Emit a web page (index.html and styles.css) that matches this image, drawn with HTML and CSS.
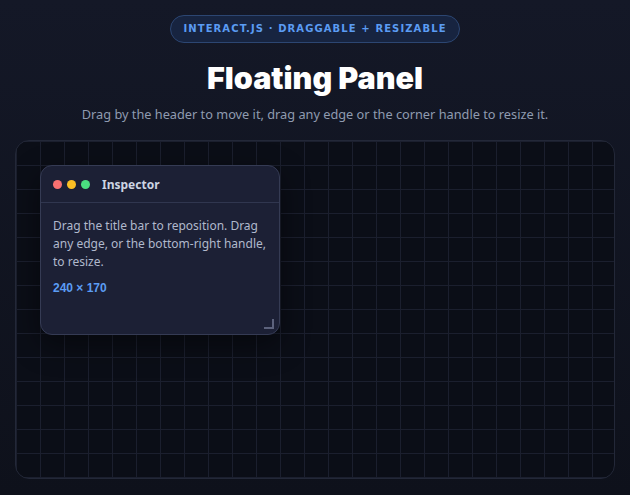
FILE: index.html
```html
<!DOCTYPE html>
<html>
	<head>
		<title>Floating Panel</title>
		<link rel="stylesheet" href="styles.css">
	</head>
	<body>
		<header class="intro">
			<span class="badge">interact.js · draggable + resizable</span>
			<h1>Floating Panel</h1>
			<p class="lead">Drag by the header to move it, drag any edge or the corner handle to resize it.</p>
		</header>
		<div class="stage">
			<div class="panel" style="left: 24px; top: 24px; width: 240px; height: 170px;">
				<div class="panel-head">
					<span class="dot red"></span>
					<span class="dot amber"></span>
					<span class="dot green"></span>
					<span class="panel-title">Inspector</span>
				</div>
				<div class="panel-body">
					<p>Drag the title bar to reposition. Drag any edge, or the bottom-right handle, to resize.</p>
					<p class="size">240 × 170</p>
				</div>
				<span class="grip"></span>
			</div>
		</div>
	</body>
</html>
```

FILE: styles.css
```css
html, body {
	height: 100%;
}
body {
	margin: 0;
	padding: 0;
	overflow: hidden;
	background: linear-gradient(180deg, #141827 0%, #0e111b 100%);
	color: #e2e8f0;
	font-family: "Noto Sans", "Open Sans", sans-serif;
}
.intro {
	text-align: center;
	padding-top: 15px;
}
.badge {
	display: inline-block;
	height: 26px;
	line-height: 26px;
	padding: 0 12px;
	border: 1px solid #2c4672;
	border-radius: 14px;
	background-color: #172440;
	color: #5b9cf3;
	font-family: "DejaVu Sans", sans-serif;
	font-size: 10px;
	font-weight: bold;
	letter-spacing: 1.1px;
	text-transform: uppercase;
}
h1 {
	margin: 17px 0 0;
	font-family: "Inter", sans-serif;
	font-weight: 900;
	font-size: 30.5px;
	line-height: 36px;
	color: #ffffff;
}
.lead {
	margin: 9px 0 0;
	font-size: 12.75px;
	color: #8f9bb0;
}
.stage {
	position: relative;
	margin: 17px 15px 0;
	height: 337px;
	border: 1px solid #232838;
	border-radius: 14px;
	background-color: #0b0e17;
	background-image:
		linear-gradient(to right, #1b1f2e 1px, transparent 1px),
		linear-gradient(to bottom, #1b1f2e 1px, transparent 1px);
	background-size: 24px 24px;
	overflow: hidden;
}
.panel {
	position: absolute;
	box-sizing: border-box;
	border: 1px solid #353b54;
	border-radius: 12px;
	background-color: #1c2035;
	box-shadow: 0 10px 30px rgba(0, 0, 0, 0.45);
}
.panel-head {
	display: flex;
	align-items: center;
	height: 36px;
	padding: 0 12px;
	border-bottom: 1px solid #30364f;
}
.dot {
	width: 9px;
	height: 9px;
	border-radius: 50%;
	margin-right: 5px;
}
.dot.red {
	background-color: #f87171;
}
.dot.amber {
	background-color: #fbbf24;
}
.dot.green {
	background-color: #4ade80;
	margin-right: 12px;
}
.panel-title {
	font-size: 12px;
	font-weight: bold;
	color: #cdd5e3;
}
.panel-body {
	padding: 14px 12px 0;
	font-size: 12px;
	line-height: 18px;
	color: #b0b9cc;
}
.panel-body p {
	margin: 0;
}
.panel-body .size {
	margin-top: 8px;
	font-family: "Liberation Sans", sans-serif;
	font-size: 12px;
	font-weight: bold;
	color: #5b9cf3;
}
.grip {
	position: absolute;
	right: 5px;
	bottom: 5px;
	width: 8px;
	height: 8px;
	border-right: 2px solid #5c627c;
	border-bottom: 2px solid #5c627c;
}
```
